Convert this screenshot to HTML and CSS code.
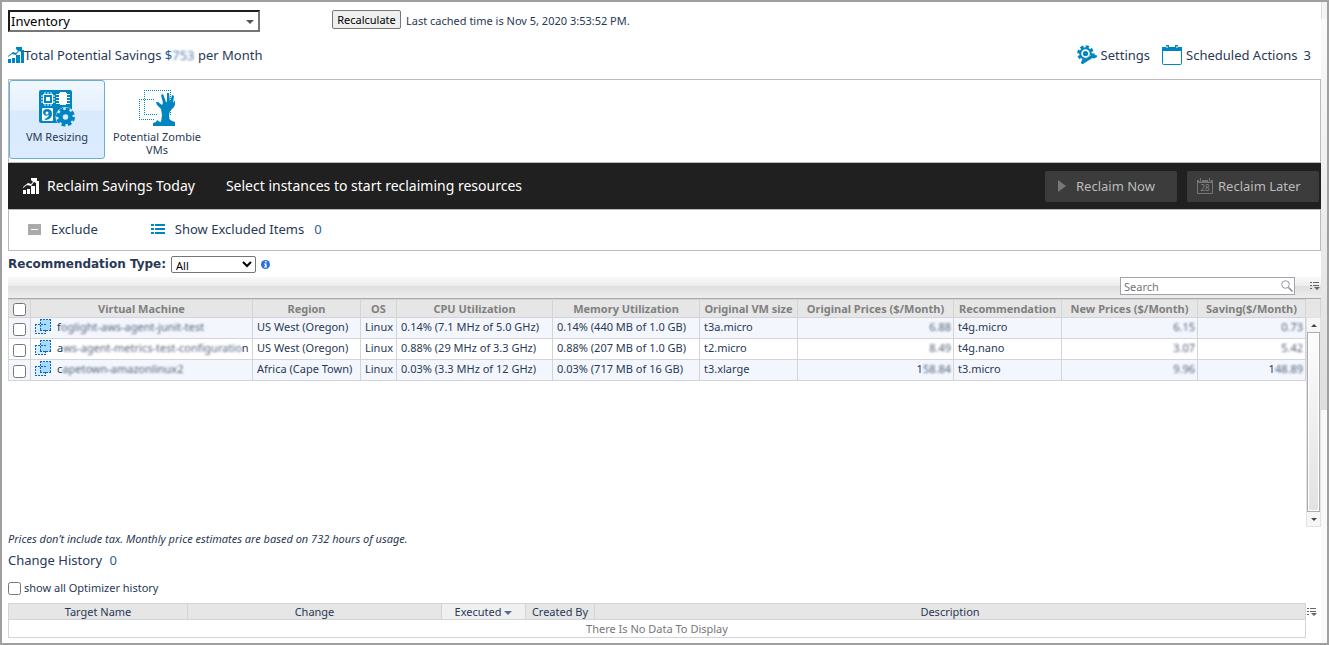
FILE: index.html
```html
<!DOCTYPE html>
<html lang="en">
<head>
    <meta charset="utf-8" />
    <meta name="viewport" content="width=device-width, initial-scale=1.0">
    <title>Optimizer</title>
    <link rel="stylesheet" href="styles.css">
</head>
<body>
    <!-- shared icons -->
    <svg class="defs" width="0" height="0" aria-hidden="true">
        <symbol id="icon-savings" viewBox="0 0 16 16">
            <path d="M0 12h3v4H0zM4 11h3v5H4zM8 8h4v8H8zM13 3h3v13h-3z" />
            <path d="M0 9l5-4 3 1 2-2-2-2V0h6v5h-1l-2-1-3 4-4-1-4 3z" />
        </symbol>
        <symbol id="icon-vm" viewBox="0 0 16 16">
            <path d="M.5 5.500h10v9H.5z" fill="#d3eeff" />
            <path d="M5.500 .5h10v11h-10z" fill="#a3dcff" />
            <path d="M0 5.500h11M0 14.500h11M5 .5h11M5 11.500h11M.5 5v10M10.500 11v4M5.500 0v12M15.500 0v12" fill="none" stroke="#1560c8" stroke-dasharray="2 1" />
        </symbol>
        <symbol id="icon-options" viewBox="0 0 10 10">
            <path d="M0 1h2v1H0zM3 1h6v1H3zM0 4h2v1H0zM3 4h6v1H3zM0 7h2v1H0zM4 6h6L7 9z" />
        </symbol>
    </svg>
    <div class="frame">
        <main class="page">
            <div class="top-bar">
                <div class="inventory">
                    <select class="inventory-select" aria-label="View">
                        <option>Inventory</option>
                    </select>
                    <svg class="inventory-arrow" width="8" height="4" viewBox="0 0 8 4"><path d="M0 0h8L4 4z" fill="#555" /></svg>
                </div>
                <button type="button" class="recalculate">Recalculate</button>
                <span class="cached">Last cached time is Nov 5, 2020 3:53:52 PM.</span>
            </div>

            <div class="summary">
                <svg class="blue" width="16" height="16"><use href="#icon-savings" /></svg>
                <span class="summary-text">Total Potential Savings <a href="#" class="amount">$<span class="blur">753</span></a> per Month</span>
                <a href="#" class="summary-link settings">
                    <svg width="20" height="20" viewBox="0 0 20 20">
                        <circle cx="8.500" cy="8.500" r="6.800" fill="none" stroke="#0085c3" stroke-width="3" stroke-dasharray="3.200 2.140" />
                        <circle cx="8.500" cy="8.500" r="5.300" fill="none" stroke="#0085c3" stroke-width="2" />
                        <circle cx="8.500" cy="8.500" r="2.600" fill="#0085c3" />
                        <path d="M6 19l9-7" stroke="#fff" stroke-width="5" />
                        <path d="M5.500 17.500L15 11.500" stroke="#0085c3" stroke-width="3.200" stroke-linecap="round" />
                        <path d="M14 8l2 2 1-2.500 1 2.500 2 .5v1.500l-3 1.500-3-1z" fill="#0085c3" />
                    </svg>
                    <span>Settings</span>
                </a>
                <a href="#" class="summary-link scheduled">
                    <svg width="20" height="20" viewBox="0 0 20 20">
                        <path d="M.5 3v15.500q0 1 1 1h17q1 0 1-1V3" fill="#fff" stroke="#0085c3" />
                        <path d="M0 2h4V0h3v2h6V0h3v2h4v4H0z" fill="#0085c3" />
                        <path d="M5 1v2M15 1v2" stroke="#fff" />
                    </svg>
                    <span>Scheduled Actions</span>
                    <span>3</span>
                </a>
            </div>

            <nav class="tabs">
                <button type="button" class="tab tab-active">
                    <svg width="36" height="37" viewBox="0 0 36 37">
                        <rect width="33" height="33" rx="2" fill="#0085c3" />
                        <path d="M4 4h10v10H4z" fill="#fff" />
                        <path d="M9 2v14M6 2v14M12 2v14M2 9h14M2 6h14M2 12h14" stroke="#fff" />
                        <path d="M5 5h8v8H5z" fill="#0085c3" />
                        <path d="M7 7h4v4H7z" fill="#fff" />
                        <path d="M17 4.500h3M17 7.500h3M17 10.500h3M17 13.500h3M28 4.500h3M28 7.500h3M28 10.500h3M28 13.500h3" stroke="#fff" />
                        <path d="M21 2h6v1h1v11h-1v1h-6v-1h-1V3h1z" fill="#fff" />
                        <rect x="3" y="18" width="11" height="13" rx="1" fill="#fff" />
                        <path d="M8 19q5 0 5 5 0 5-6 6l-2-1q4-1 5-4-5 2-6-2 0-4 4-4z" fill="#0085c3" />
                        <circle cx="8" cy="23" r="1.500" fill="#fff" />
                        <circle cx="26.500" cy="27" r="10" fill="#d9ebfc" />
                        <circle cx="26.500" cy="27" r="7.500" fill="none" stroke="#0085c3" stroke-width="4" stroke-dasharray="3.600 2.290" />
                        <circle cx="26.500" cy="27" r="5" fill="none" stroke="#0085c3" stroke-width="4.500" />
                    </svg>
                    <span>VM Resizing</span>
                </button>
                <button type="button" class="tab">
                    <svg width="36" height="37" viewBox="0 0 36 37">
                        <path d="M5 .5h27M5.500 0v25M31.500 0v25M5 24.500h13M0 9.500h16M.5 9v21M0 29.500h16" fill="none" stroke="#0085c3" stroke-dasharray="1 1" />
                        <path d="M22 32l1-7-1-6-4-4-1-3 2 0 4 3 1-2-2-8 2-1 3 8h1V3h2l1 9 2-7 2 1-1 7 3-4 1 1-3 7-4 4-1 4 1 8z" fill="#0085c3" />
                        <path d="M14 36v-3l3-1 1-2 3 2 4-1 3 1 2-3 3 2 3 1v4z" fill="#0085c3" />
                    </svg>
                    <span>Potential Zombie VMs</span>
                </button>
            </nav>

            <section class="reclaim">
                <svg class="reclaim-icon" width="16" height="16"><use href="#icon-savings" /></svg>
                <span class="reclaim-title">Reclaim Savings Today</span>
                <span class="reclaim-hint">Select instances to start reclaiming resources</span>
                <button type="button" class="reclaim-button">
                    <svg width="16" height="16" viewBox="0 0 16 16"><path d="M3 2l8 6-8 6z" fill="#777" /></svg>
                    <span>Reclaim Now</span>
                </button>
                <button type="button" class="reclaim-button">
                    <svg width="16" height="16" viewBox="0 0 16 16">
                        <path d="M.5 2.500h15v13H.5z" fill="none" stroke="#777" />
                        <path d="M0 2h16v3H0z" fill="#777" />
                        <path d="M3.500 0v3.500M12.500 0v3.500" stroke="#3c3c3c" stroke-width="3" />
                        <path d="M3.500 0v3M12.500 0v3" stroke="#777" />
                        <text x="8" y="13" class="day">28</text>
                    </svg>
                    <span>Reclaim Later</span>
                </button>
            </section>

            <div class="actions">
                <button type="button" class="action exclude">
                    <svg width="13" height="11" viewBox="0 0 13 11"><path d="M0 0h13v11H0z" fill="#aaa" /><path d="M3 5.500h7" stroke="#fff" /></svg>
                    <span>Exclude</span>
                </button>
                <button type="button" class="action">
                    <svg width="14" height="10" viewBox="0 0 14 10"><path d="M0 0h3v2H0zM4 0h10v2H4zM0 4h3v2H0zM4 4h10v2H4zM0 8h3v2H0zM4 8h10v2H4z" fill="#0085c3" /></svg>
                    <span>Show Excluded Items</span>
                </button>
                <a href="#" class="count">0</a>
            </div>

            <div class="filter">
                <label for="type" class="filter-label">Recommendation Type:</label>
                <select id="type" class="filter-select">
                    <option>All</option>
                </select>
                <svg width="9" height="9" viewBox="0 0 9 9"><circle cx="4.500" cy="4.500" r="4.500" fill="#2b6fdc" /><path d="M4 1h1.500v1.500H4zM3 3.500h2.500V6.500H6v1H3v-1h1v-2H3z" fill="#fff" /></svg>
            </div>

            <div class="grid-bar">
                <div class="search">
                    <input type="text" class="search-input" placeholder="Search" aria-label="Search">
                    <svg width="12" height="12" viewBox="0 0 12 12"><circle cx="4.500" cy="4.500" r="3.800" fill="none" stroke="#999" /><path d="M7.500 7.500l4 4" stroke="#888" stroke-width="1.500" /></svg>
                </div>
                <button type="button" class="options" aria-label="Table options"><svg width="10" height="10"><use href="#icon-options" /></svg></button>
            </div>

            <div class="grid">
                <div class="grid-body">
                    <table class="vm-table">
                        <colgroup>
                            <col class="col-check">
                            <col>
                            <col class="col-region">
                            <col class="col-os">
                            <col class="col-cpu">
                            <col class="col-memory">
                            <col class="col-size">
                            <col class="col-original">
                            <col class="col-recommendation">
                            <col class="col-new">
                            <col class="col-saving">
                        </colgroup>
                        <thead>
                            <tr>
                                <th><input type="checkbox" aria-label="Select all"></th>
                                <th>Virtual Machine</th>
                                <th>Region</th>
                                <th>OS</th>
                                <th>CPU Utilization</th>
                                <th>Memory Utilization</th>
                                <th>Original VM size</th>
                                <th>Original Prices ($/Month)</th>
                                <th>Recommendation</th>
                                <th>New Prices ($/Month)</th>
                                <th>Saving($/Month)</th>
                            </tr>
                        </thead>
                        <tbody>
                            <tr>
                                <td class="check"><input type="checkbox" aria-label="Select row 1"></td>
                                <td><div class="vm"><svg width="16" height="16"><use href="#icon-vm" /></svg><span>f<span class="blur">oglight-aws-agent-junit-test</span></span></div></td>
                                <td>US West (Oregon)</td>
                                <td>Linux</td>
                                <td>0.14% (7.1 MHz of 5.0 GHz)</td>
                                <td>0.14% (440 MB of 1.0 GB)</td>
                                <td>t3a.micro</td>
                                <td class="price"><span class="blur">6.88</span></td>
                                <td>t4g.micro</td>
                                <td class="price"><span class="blur">6.15</span></td>
                                <td class="price"><span class="blur">0.73</span></td>
                            </tr>
                            <tr>
                                <td class="check"><input type="checkbox" aria-label="Select row 2"></td>
                                <td><div class="vm"><svg width="16" height="16"><use href="#icon-vm" /></svg><span>a<span class="blur">ws-agent-metrics-test-configuratio</span>n</span></div></td>
                                <td>US West (Oregon)</td>
                                <td>Linux</td>
                                <td>0.88% (29 MHz of 3.3 GHz)</td>
                                <td>0.88% (207 MB of 1.0 GB)</td>
                                <td>t2.micro</td>
                                <td class="price"><span class="blur">8.49</span></td>
                                <td>t4g.nano</td>
                                <td class="price"><span class="blur">3.07</span></td>
                                <td class="price"><span class="blur">5.42</span></td>
                            </tr>
                            <tr>
                                <td class="check"><input type="checkbox" aria-label="Select row 3"></td>
                                <td><div class="vm"><svg width="16" height="16"><use href="#icon-vm" /></svg><span>c<span class="blur">apetown-amazonlinux2</span></span></div></td>
                                <td>Africa (Cape Town)</td>
                                <td>Linux</td>
                                <td>0.03% (3.3 MHz of 12 GHz)</td>
                                <td>0.03% (717 MB of 16 GB)</td>
                                <td>t3.xlarge</td>
                                <td class="price">1<span class="blur">58.84</span></td>
                                <td>t3.micro</td>
                                <td class="price"><span class="blur">9.96</span></td>
                                <td class="price">1<span class="blur">48.89</span></td>
                            </tr>
                        </tbody>
                    </table>
                </div>
                <div class="grid-side">
                    <div class="grid-corner"></div>
                    <div class="scrollbar">
                        <div class="scroll-button"><svg width="6" height="3" viewBox="0 0 6 3"><path d="M0 3h6L3 0z" fill="#444" /></svg></div>
                        <div class="scroll-thumb"></div>
                        <div class="scroll-button"><svg width="6" height="3" viewBox="0 0 6 3"><path d="M0 0h6L3 3z" fill="#444" /></svg></div>
                    </div>
                </div>
            </div>

            <p class="note">Prices don’t include tax. Monthly price estimates are based on 732 hours of usage.</p>
            <div class="history-title">Change History <a href="#" class="count">0</a></div>
            <label class="history-check"><input type="checkbox"> show all Optimizer history</label>
            <div class="history">
                <table class="history-table">
                    <colgroup>
                        <col class="col-target">
                        <col class="col-change">
                        <col class="col-executed">
                        <col class="col-created">
                        <col>
                    </colgroup>
                    <thead>
                        <tr>
                            <th>Target Name</th>
                            <th>Change</th>
                            <th class="sorted">Executed <svg width="8" height="4" viewBox="0 0 8 4"><path d="M0 0h8L4 4z" fill="#5b6b8c" /></svg></th>
                            <th>Created By</th>
                            <th>Description</th>
                        </tr>
                    </thead>
                    <tbody>
                        <tr>
                            <td colspan="5">There Is No Data To Display</td>
                        </tr>
                    </tbody>
                </table>
                <button type="button" class="options" aria-label="History options"><svg width="10" height="10"><use href="#icon-options" /></svg></button>
            </div>
        </main>
        <div class="page-scroll">
            <div class="page-scroll-top"></div>
            <div class="page-scroll-thumb"></div>
        </div>
    </div>
</body>
</html>
```
FILE: styles.css
```css
* {
    box-sizing: border-box;
}
body {
    margin: 0;
    background: #fff;
    color: #293955;
    font-family: "Noto Sans", "Open Sans", sans-serif;
    font-size: 11px;
    line-height: 14px;
}
button,
input,
select {
    font-family: inherit;
    font-size: 11px;
}
button {
    color: inherit;
    padding: 0;
    border: none;
    background: none;
}
input[type="checkbox"] {
    width: 13px;
    height: 13px;
    margin: 0;
}
a {
    color: inherit;
    text-decoration: none;
}
svg {
    display: block;
    flex: none;
}
.defs {
    position: absolute;
}
.blue {
    fill: #0085c3;
}
.blur {
    filter: blur(1px);
    display: inline-block;
    opacity: 0.8;
}
.frame {
    display: flex;
    min-height: 100vh;
    border: 2px solid #a0a0a0;
}
.page {
    flex: 1;
    min-width: 0;
    display: flex;
    flex-direction: column;
    padding: 8px 0 5px 6px;
}
.page-scroll {
    width: 6px;
    display: flex;
    flex-direction: column;
    background: #f9f9f9;
}
.page-scroll-top {
    height: 17px;
    border-left: 1px solid #ddd;
    background: #f4f4f4;
}
.page-scroll-thumb {
    height: 61%;
    background: linear-gradient(#fafafa, #dedede);
}

/* top */
.top-bar {
    display: flex;
    align-items: flex-start;
    height: 22px;
}
.inventory {
    position: relative;
    width: 252px;
    margin-right: 72px;
}
.inventory-select {
    display: block;
    width: 100%;
    height: 22px;
    padding: 0 1px;
    appearance: none;
    border: 2px solid;
    border-color: #1c1c1c #767676 #767676 #1c1c1c;
    border-radius: 0;
    background: #fff;
    color: #000;
    font-size: 13px;
}
.inventory-arrow {
    position: absolute;
    right: 6px;
    top: 10px;
    pointer-events: none;
}
.recalculate {
    width: 69px;
    height: 19px;
    border: 1px solid #767676;
    border-radius: 2px;
    background: #efefef;
    color: #000;
}
.cached {
    margin: 4px 0 0 5px;
}
.summary {
    display: flex;
    align-items: center;
    height: 47px;
    padding-bottom: 2px;
    font-size: 13px;
    line-height: 20px;
}
.summary-text {
    flex: 1;
}
.amount,
.count {
    color: #2a6099;
}
.summary-link {
    display: flex;
    align-items: center;
    gap: 4px;
}
.scheduled {
    margin: 0 10px 0 12px;
    gap: 4px;
}
.scheduled span:last-child {
    margin-left: 2px;
}

/* tabs */
.tabs {
    display: flex;
    gap: 4px;
    height: 84px;
    border: 1px solid #bbb;
}
.tab {
    display: flex;
    flex-direction: column;
    align-items: center;
    gap: 3px;
    width: 96px;
    height: 79px;
    padding: 9px 0 0;
    border: 1px solid transparent;
    border-radius: 3px;
    line-height: 13px;
}
.tab-active {
    border-color: #66afd7;
    background: linear-gradient(#f0f7ff 0%, #e6f1fe 38%, #d9eafd 39%, #dcecfe 100%);
}

/* reclaim bar */
.reclaim {
    display: flex;
    align-items: center;
    height: 46px;
    padding: 0 2px 0 15px;
    background: #202020;
    color: #fff;
    font-size: 14px;
}
.reclaim-icon {
    fill: #fff;
    margin-right: 8px;
}
.reclaim-title {
    margin-right: 31px;
}
.reclaim-hint {
    flex: 1;
}
.reclaim-button {
    display: flex;
    align-items: center;
    gap: 5px;
    width: 132px;
    height: 31px;
    margin: 0 0 0 10px;
    padding-left: 10px;
    border-radius: 2px;
    background: #3c3c3c;
    color: #bbb;
    font-size: 13px;
}
.day {
    fill: #888;
    font-size: 8px;
    text-anchor: middle;
}
.actions {
    display: flex;
    align-items: center;
    height: 42px;
    padding: 0 0 2px 19px;
    border: 1px solid #bbb;
    font-size: 13px;
}
.action {
    display: flex;
    align-items: center;
    gap: 10px;
    font-size: 13px;
}
.exclude {
    margin-right: 53px;
}
.count {
    margin-left: 10px;
}
.filter {
    display: flex;
    align-items: center;
    gap: 5px;
    height: 26px;
}
.filter-label {
    font-family: "DejaVu Sans", sans-serif;
    font-size: 12px;
    font-weight: bold;
}
.filter-select {
    width: 85px;
    height: 17px;
    padding: 0;
    border: 1px solid #767676;
    border-radius: 2px;
    background: #fff;
    color: #000;
}

/* virtual machines */
.grid-bar {
    display: flex;
    align-items: center;
    justify-content: flex-end;
    gap: 15px;
    height: 21px;
    padding: 0 1px 3px 0;
    background: linear-gradient(#f8f8f8, #eee 40%, #dfdfdf 45%, #ededed);
}
.search {
    display: flex;
    align-items: center;
    width: 175px;
    height: 18px;
    padding-right: 1px;
    border: 1px solid #a2a4ae;
    background: #fff;
}
.search-input {
    flex: 1;
    min-width: 0;
    height: 16px;
    padding: 0 3px;
    border: none;
    outline: none;
    background: none;
}
.search-input::placeholder {
    color: #757575;
}
.options {
    fill: #666;
}
.grid {
    flex: 1;
    display: flex;
    min-height: 150px;
    border-top: 1px solid #aaa;
}
.grid-body {
    flex: 1;
    min-width: 0;
}
table {
    width: 100%;
    border-collapse: collapse;
    table-layout: fixed;
}
th,
td {
    border: 1px solid #d2d4d8;
    white-space: nowrap;
}
.vm-table th {
    height: 18px;
    padding: 0;
    background: #e6e6e6;
    color: #808080;
}
.vm-table td {
    height: 21px;
    padding: 0 0 2px 4px;
}
.vm-table th input,
.vm-table .check input {
    display: block;
    margin: 2px 0 0 4px;
}
.vm-table .check {
    padding: 0;
}
.vm-table .price {
    padding: 0 2px 2px 0;
    text-align: right;
}
.vm-table tbody tr:nth-child(odd) {
    background: #f3f7fd;
}
.vm {
    display: flex;
    align-items: center;
    gap: 6px;
}
.col-check {
    width: 22px;
}
.col-region,
.col-recommendation,
.col-saving {
    width: 108px;
}
.col-os {
    width: 36px;
}
.col-cpu,
.col-original {
    width: 156px;
}
.col-memory {
    width: 147px;
}
.col-size {
    width: 98px;
}
.col-new {
    width: 136px;
}
.grid-side {
    display: flex;
    flex-direction: column;
    width: 15px;
}
.grid-corner {
    height: 18px;
    border-right: 1px solid #d2d4d8;
    background: #e6e6e6;
}
.scrollbar {
    flex: 1;
    display: flex;
    flex-direction: column;
    border: 1px solid #e2e2e2;
}
.scroll-button {
    display: flex;
    align-items: center;
    justify-content: center;
    height: 14px;
    background: #f6f6f6;
}
.scroll-thumb {
    flex: 1;
    border: 1px solid #a9abb3;
    background: linear-gradient(#fcfcfc, #e2e2e2);
    box-shadow: inset 0 0 0 1px #fff;
}

/* history */
.note {
    margin: 5px 0 0;
    font-style: italic;
}
.history-title {
    margin-top: 4px;
    font-size: 13px;
    line-height: 20px;
}
.history-title .count {
    margin-left: 4px;
}
.history-check {
    display: flex;
    align-items: center;
    gap: 3px;
    margin: 10px 0 7px;
    line-height: 16px;
}
.history {
    display: flex;
    align-items: flex-start;
    padding-right: 4px;
}
.history .options {
    margin: 4px 0 0 1px;
}
.history-table {
    flex: 1;
}
.history-table th {
    height: 16px;
    padding: 0;
    background: #e6e6e6;
    font-weight: normal;
}
.history-table .sorted {
    background: #f0f0f0;
}
.sorted svg {
    display: inline-block;
    vertical-align: 1px;
}
.history-table td {
    height: 18px;
    padding: 0;
    color: #777;
    text-align: center;
}
.col-target {
    width: 179px;
}
.col-change {
    width: 254px;
}
.col-executed {
    width: 84px;
}
.col-created {
    width: 69px;
}
```
